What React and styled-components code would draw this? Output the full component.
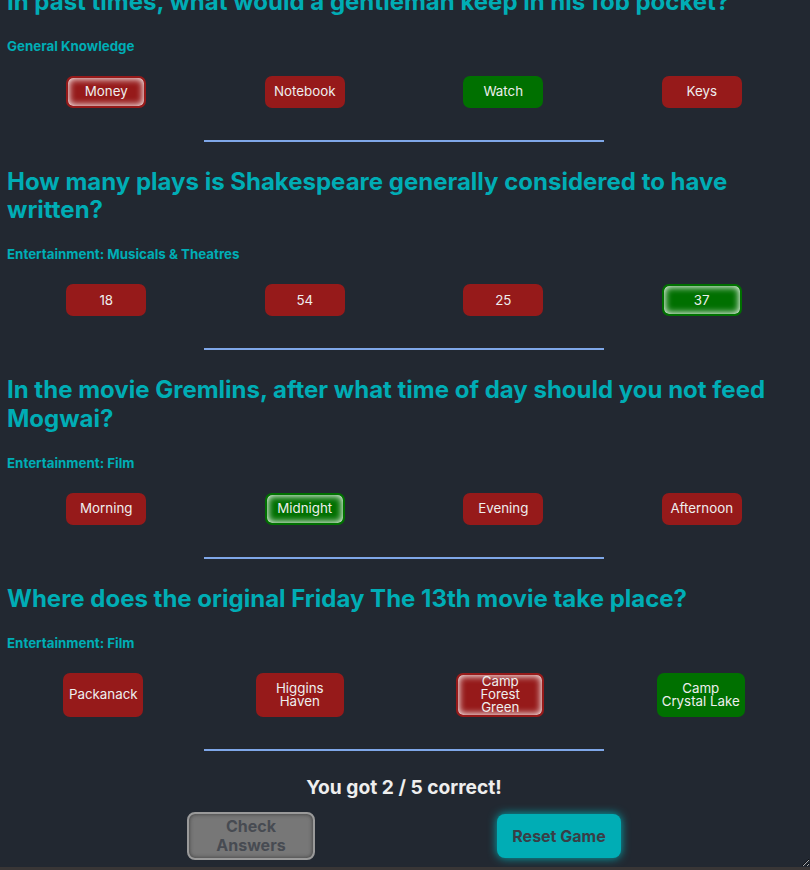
import React, { useLayoutEffect, useRef } from "react";
import styled, { createGlobalStyle } from "styled-components";

const GlobalStyle = createGlobalStyle`
  body {
    margin: 0;
    background-color: #393636;
    font-family: Inter, "Noto Sans", sans-serif;
  }
`;

const Frame = styled.div`
  height: 867px;
  overflow: hidden;
  resize: both;
  background-color: #222831;
  box-sizing: border-box;
  padding: 0 9px 7px 7px;
`;

const Question = styled.section`
  & + & {
    padding-top: 26px;
  }
`;

const Heading = styled.h2`
  margin: 0;
  color: #00adb5;
  font-size: 24px;
  line-height: 1.2;
  font-weight: 700;
`;

const Category = styled.h4`
  margin: 21px 0 0;
  color: #00adb5;
  font-size: 13.33px;
  line-height: 16px;
  font-weight: 700;
`;

const Answers = styled.div`
  display: flex;
  justify-content: space-around;
  align-items: stretch;
  margin-top: 22px;
`;

const colors = {
  wrong: "#961a1a",
  right: "#007000",
};

const Answer = styled.button`
  box-sizing: border-box;
  min-width: 80px;
  max-width: 88px;
  min-height: 32px;
  padding: 0.5px 2px;
  border: ${(p) => (p.$picked ? `2px solid ${colors[p.$kind]}` : "none")};
  border-radius: 7px;
  background-color: ${(p) => colors[p.$kind]};
  box-shadow: ${(p) => (p.$picked ? "inset 0 0 7px 1px #ffffff" : "none")};
  color: #eeeeee;
  font-family: Inter, "Noto Sans", sans-serif;
  font-size: 13.33px;
  line-height: 13px;
  cursor: pointer;
`;

const Divider = styled.hr`
  width: 400px;
  height: 2px;
  margin: 32px auto 0;
  border: none;
  background-color: #7fa7e8;
`;

const Score = styled.p`
  margin: 25px 0 0;
  text-align: center;
  color: #eeeeee;
  font-size: 19.2px;
  line-height: 1.2;
  font-weight: 700;
`;

const Controls = styled.div`
  display: flex;
  justify-content: center;
  align-items: center;
  gap: 182px;
  margin-top: 13px;
`;

const CheckButton = styled.button`
  box-sizing: border-box;
  width: 128px;
  padding: 3px 12px;
  border: 2px solid #9a9a9a;
  border-radius: 8px;
  background-color: #777777;
  box-shadow: inset 0 0 4px #3a3a3a;
  color: #474b52;
  font-family: Inter, "Noto Sans", sans-serif;
  font-size: 16px;
  line-height: 1.2;
  font-weight: 700;
`;

const ResetButton = styled.button`
  box-sizing: border-box;
  width: 124px;
  height: 44px;
  padding: 0 8px;
  border: none;
  border-radius: 8px;
  background-color: #00adb5;
  box-shadow: 0 0 10px #00adb5;
  color: #393e46;
  font-family: Inter, "Noto Sans", sans-serif;
  font-size: 16px;
  font-weight: 700;
  white-space: nowrap;
  cursor: pointer;
`;

const questions = [
  {
    question: "Which of these is the chemical symbol for gold?",
    category: "Science & Nature",
    answers: [
      { text: "Ag", kind: "wrong", picked: true },
      { text: "Au", kind: "right" },
      { text: "Gd", kind: "wrong" },
      { text: "Go", kind: "wrong" },
    ],
  },
  {
    question: "In past times, what would a gentleman keep in his fob pocket?",
    category: "General Knowledge",
    answers: [
      { text: "Money", kind: "wrong", picked: true },
      { text: "Notebook", kind: "wrong" },
      { text: "Watch", kind: "right" },
      { text: "Keys", kind: "wrong" },
    ],
  },
  {
    question: "How many plays is Shakespeare generally considered to have written?",
    category: "Entertainment: Musicals & Theatres",
    answers: [
      { text: "18", kind: "wrong" },
      { text: "54", kind: "wrong" },
      { text: "25", kind: "wrong" },
      { text: "37", kind: "right", picked: true },
    ],
  },
  {
    question: "In the movie Gremlins, after what time of day should you not feed Mogwai?",
    category: "Entertainment: Film",
    answers: [
      { text: "Morning", kind: "wrong" },
      { text: "Midnight", kind: "right", picked: true },
      { text: "Evening", kind: "wrong" },
      { text: "Afternoon", kind: "wrong" },
    ],
  },
  {
    question: "Where does the original Friday The 13th movie take place?",
    category: "Entertainment: Film",
    answers: [
      { text: "Packanack", kind: "wrong" },
      { text: "Higgins Haven", kind: "wrong" },
      { text: "Camp Forest Green", kind: "wrong", picked: true },
      { text: "Camp Crystal Lake", kind: "right" },
    ],
  },
];

export default function App() {
  const frameRef = useRef(null);

  // the results view is shown scrolled down to the score
  useLayoutEffect(() => {
    const el = frameRef.current;
    if (el) el.scrollTop = el.scrollHeight;
  }, []);

  return (
    <>
      <GlobalStyle />
      <Frame ref={frameRef}>
        {questions.map((q) => (
          <Question key={q.question}>
            <Heading>{q.question}</Heading>
            <Category>{q.category}</Category>
            <Answers>
              {q.answers.map((a) => (
                <Answer key={a.text} $kind={a.kind} $picked={a.picked}>
                  {a.text}
                </Answer>
              ))}
            </Answers>
            <Divider />
          </Question>
        ))}
        <Score>You got 2 / 5 correct!</Score>
        <Controls>
          <CheckButton disabled>Check Answers</CheckButton>
          <ResetButton>Reset Game</ResetButton>
        </Controls>
      </Frame>
    </>
  );
}
